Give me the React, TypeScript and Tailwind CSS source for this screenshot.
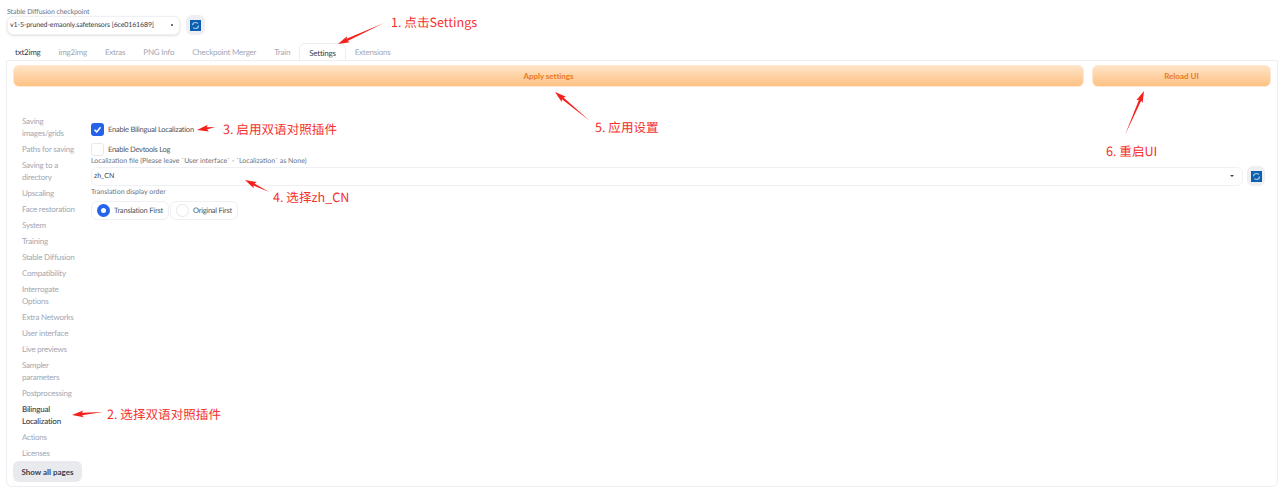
const font = 'Lato, "Noto Sans CJK SC", "Noto Sans", sans-serif';
const cjk = '"Noto Sans CJK SC", "Noto Sans", sans-serif';

const tabs = ["txt2img", "img2img", "Extras", "PNG Info", "Checkpoint Merger", "Train", "Settings", "Extensions"];
const pages: [string, boolean?][] = [
  ["Saving images/grids"], ["Paths for saving"], ["Saving to a directory"], ["Upscaling"], ["Face restoration"],
  ["System"], ["Training"], ["Stable Diffusion"], ["Compatibility"], ["Interrogate Options"], ["Extra Networks"],
  ["User interface"], ["Live previews"], ["Sampler parameters"], ["Postprocessing"], ["Bilingual Localization", true],
  ["Actions"], ["Licenses"],
];

function Refresh({ className }: { className: string }) {
  return (
    <button className={`flex items-center justify-center rounded-md bg-[#eeeff3] ${className}`}>
      <svg width="11" height="11" viewBox="0 0 11 11">
        <rect width="11" height="11" fill="#0f5fb0" />
        <circle cx="5.5" cy="5.5" r="3" fill="none" stroke="#9fd0f0" strokeWidth="1.2" strokeDasharray="7 2.4" />
      </svg>
    </button>
  );
}

function Arrow({ x1, y1, x2, y2 }: { x1: number; y1: number; x2: number; y2: number }) {
  const dx = x2 - x1, dy = y2 - y1;
  const len = Math.hypot(dx, dy);
  const ux = dx / len, uy = dy / len;
  const bx = x2 - ux * 10, by = y2 - uy * 10;
  const points = `${x1},${y1} ${bx - uy * 1.2},${by + ux * 1.2} ${bx - uy * 3.4 - ux * 1.5},${by + ux * 3.4 - uy * 1.5} ${x2},${y2} ${bx + uy * 3.4 - ux * 1.5},${by - ux * 3.4 - uy * 1.5} ${bx + uy * 1.2},${by - ux * 1.2}`;
  return <polygon points={points} fill="#f5211d" />;
}

const notes: [string, string][] = [
  ["1. 点击Settings", "left-[391px] top-[12px]"],
  ["2. 选择双语对照插件", "left-[107px] top-[404px]"],
  ["3. 启用双语对照插件", "left-[223px] top-[119px]"],
  ["4. 选择zh_CN", "left-[273px] top-[187px]"],
  ["5. 应用设置", "left-[595px] top-[117px]"],
  ["6. 重启UI", "left-[1106px] top-[141px]"],
];

export default function App() {
  return (
    <div className="relative h-[491px] w-[1280px] overflow-hidden bg-white text-[#374151] [text-rendering:geometricPrecision]" style={{ fontFamily: font }}>
      <div className="flex flex-col pl-[6px] pr-[2px] pt-[6px]">
        <div className="pl-[1px] text-[7px] leading-[12px] tracking-[-0.08px] text-[#6b7280]">Stable Diffusion checkpoint</div>
        <div className="mt-[-3px] flex items-center gap-[6px] pb-[8px]">
          <div className="ml-[1px] flex h-[19px] w-[173px] items-center justify-between rounded-md border border-[#eef0f3] bg-white pl-[2px] pr-[6px] text-[7px] tracking-[-0.13px] text-[#374151] shadow-sm">
            <span className="whitespace-nowrap">v1-5-pruned-emaonly.safetensors [6ce0161689]</span>
            <span className="h-[2px] w-[2px] shrink-0 bg-[#6b7280]"></span>
          </div>
          <Refresh className="h-[20px] w-[19px]" />
        </div>
        <div className="flex h-[17px] items-end text-[8px] tracking-[-0.22px]">
          {tabs.map((t) => (
            <div
              key={t}
              className={`flex h-[17px] items-center px-[9px] ${
                t === "Settings"
                  ? "mb-[-1px] h-[18px] rounded-t-md border border-b-0 border-[#eceef2] bg-white text-[#374151]"
                  : t === "txt2img"
                    ? "text-[#374151]"
                    : "text-[#a2a8b3]"
              }`}
            >
              {t}
            </div>
          ))}
        </div>
        <div className="flex h-[427px] flex-col rounded-b-md border border-[#eceef2] px-[6px] pt-[4px]">
          <div className="flex gap-[8px]">
            <button className="h-[22px] flex-1 rounded-md border border-[#ffe8cf] bg-gradient-to-b from-[#ffe4c6] to-[#fdc184] text-[8px] font-bold tracking-[-0.05px] text-[#ea7a23]">
              Apply settings
            </button>
            <button className="h-[22px] w-[179px] rounded-md border border-[#ffe8cf] bg-gradient-to-b from-[#ffe4c6] to-[#fdc184] text-[8px] font-bold text-[#ea7a23]">
              Reload UI
            </button>
          </div>
          <div className="flex flex-1">
            <div className="flex w-[78px] shrink-0 flex-col pt-[28px]">
              <div className="flex flex-col gap-[4px] pl-[9px] pr-[11px]">
                {pages.map(([p, active]) => (
                  <div key={p} className={`text-[8px] leading-[12px] tracking-[-0.22px] ${active ? "font-medium text-[#374151]" : "text-[#a2a8b3]"}`}>
                    {p}
                  </div>
                ))}
              </div>
              <button className="mt-[2px] h-[21px] w-[69px] rounded-md bg-[#e9eaee] text-[8px] font-bold text-[#374151]">
                Show all pages
              </button>
            </div>
            <div className="flex flex-1 flex-col pr-[6px] pt-[36px]">
              <label className="flex h-[13px] items-center gap-[4px] text-[7.5px] tracking-[-0.23px] text-[#4b5563]">
                <span className="flex h-[13px] w-[13px] shrink-0 items-center justify-center rounded-[3px] bg-[#2563eb]">
                  <svg width="9" height="9" viewBox="0 0 12 12" fill="none" stroke="#fff" strokeWidth="2">
                    <path d="M2 6.5 5 9.2 10 3" />
                  </svg>
                </span>
                Enable Bilingual Localization
              </label>
              <label className="mt-[7px] flex h-[13px] items-center gap-[4px] text-[7.5px] tracking-[-0.27px] text-[#4b5563]">
                <span className="h-[13px] w-[13px] shrink-0 rounded-[3px] border border-[#e5e7eb] bg-white"></span>
                Enable Devtools Log
              </label>
              <div className="text-[7px] leading-[10px] text-[#6b7280]">
                Localization file (Please leave `User interface` - `Localization` as None)
              </div>
              <div className="flex items-center gap-[4px]">
                <div className="flex h-[19px] flex-1 items-center justify-between rounded-md border border-[#eef0f3] pl-[2px] pr-[8px] text-[7px] text-[#374151]">
                  <span>zh_CN</span>
                  <span className="h-0 w-0 border-x-[2px] border-t-[2px] border-x-transparent border-t-[#374151]"></span>
                </div>
                <Refresh className="h-[20px] w-[18px]" />
              </div>
              <div className="text-[7px] leading-[12px] text-[#6b7280]">Translation display order</div>
              <div className="mt-[3px] flex gap-[1px]">
                <div className="flex h-[19px] w-[78px] items-center gap-[4px] whitespace-nowrap rounded-md border border-[#eef0f3] pl-[5px] text-[7.5px] tracking-[-0.2px] text-[#4b5563]">
                  <span className="flex h-[13px] w-[13px] shrink-0 items-center justify-center rounded-full bg-[#2563eb]">
                    <span className="h-[5px] w-[5px] rounded-full bg-white"></span>
                  </span>
                  Translation First
                </div>
                <div className="flex h-[19px] w-[68px] items-center gap-[4px] whitespace-nowrap rounded-md border border-[#eef0f3] pl-[5px] text-[7.5px] tracking-[-0.25px] text-[#4b5563]">
                  <span className="h-[13px] w-[13px] shrink-0 rounded-full border border-[#e5e7eb] bg-white"></span>
                  Original First
                </div>
              </div>
            </div>
          </div>
        </div>
      </div>

      <svg className="absolute left-0 top-0" width="1280" height="491">
        <Arrow x1={384} y1={23} x2={338} y2={44} />
        <Arrow x1={103} y1={412} x2={72} y2={415} />
        <Arrow x1={215} y1={127} x2={197} y2={130} />
        <Arrow x1={269} y1={192} x2={245} y2={180} />
        <Arrow x1={590} y1={121} x2={555} y2={92} />
        <Arrow x1={1125} y1={135} x2={1144} y2={91} />
      </svg>
      {notes.map(([t, c]) => (
        <div key={t} className={`absolute whitespace-nowrap text-[12.6px] leading-[19px] text-[#f5312d] ${c}`} style={{ fontFamily: cjk }}>
          {t}
        </div>
      ))}
    </div>
  );
}
